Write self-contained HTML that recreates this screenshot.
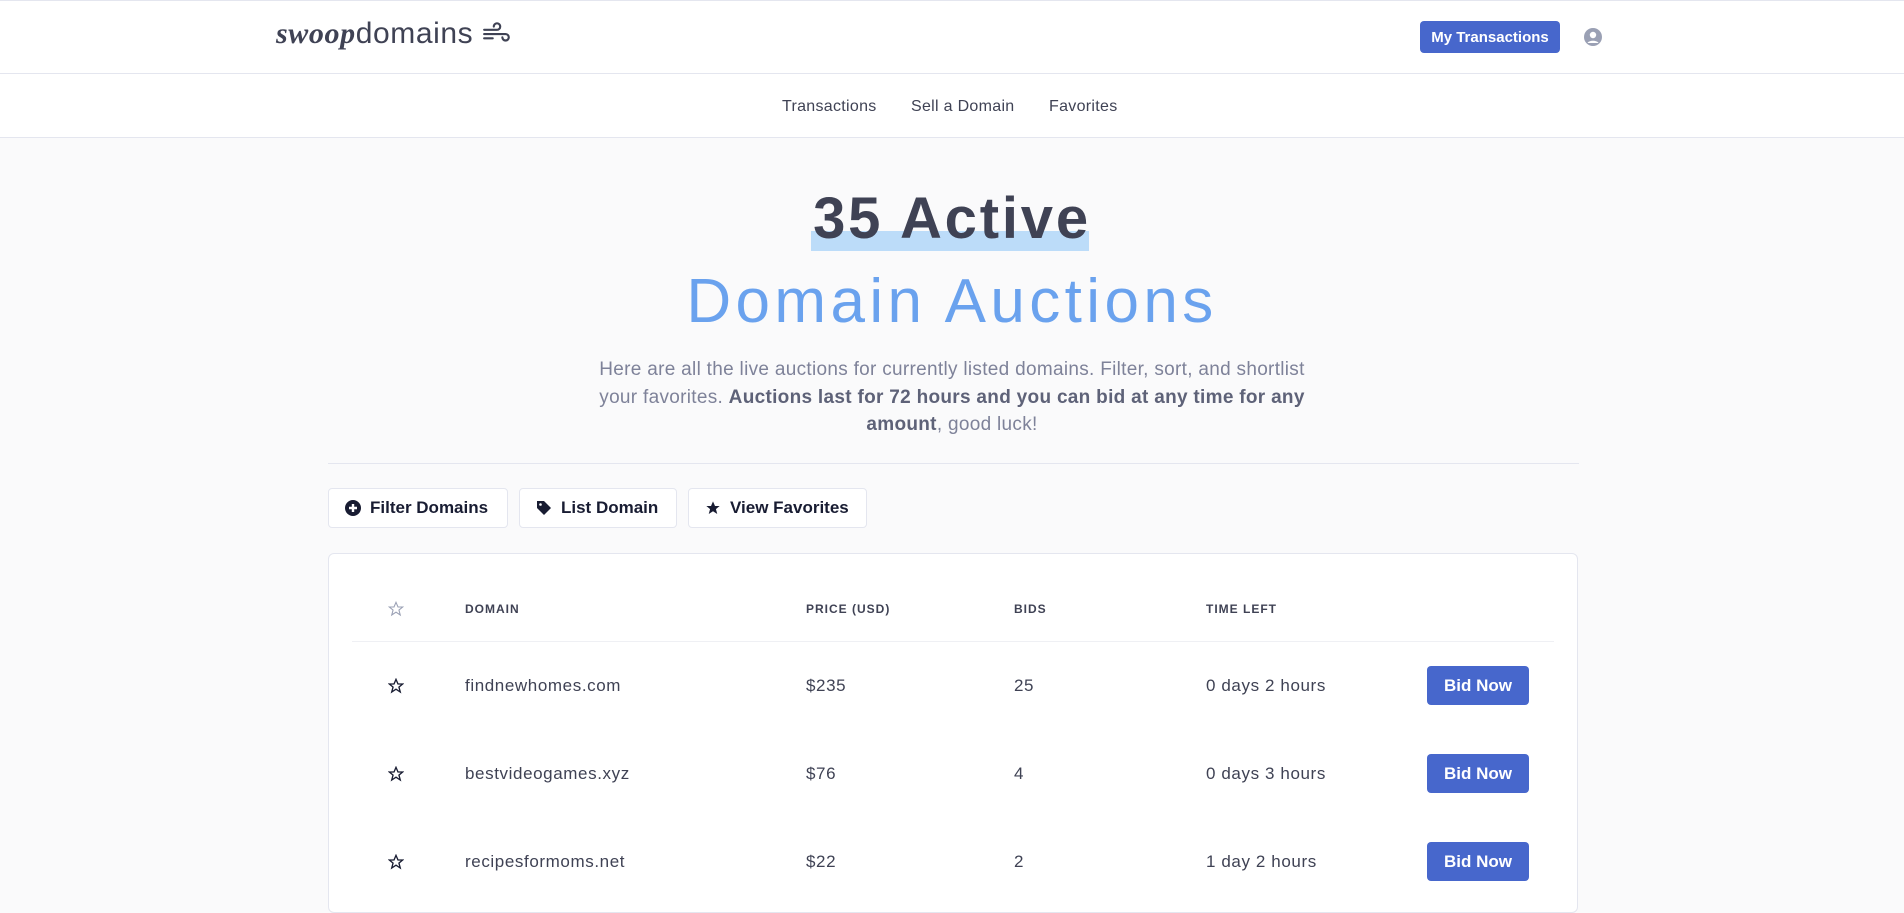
<!DOCTYPE html>
<html><head><meta charset="utf-8"><style>
*{box-sizing:border-box;margin:0;padding:0}
body{width:1904px;height:890px;overflow:hidden;background:#fafafb;font-family:"Liberation Sans",sans-serif;color:#3f4254;position:relative}
.abs{position:absolute}
.top{left:0;top:0;width:1904px;height:74px;background:#fff;border-bottom:1px solid #e4e6ef;border-top:1px solid #e4e6ef}
.nav{left:0;top:74px;width:1904px;height:64px;background:#fff;border-bottom:1px solid #e4e6ef}
.navl{top:98px;font-size:16px;color:#3f4254;letter-spacing:0.3px}
.btn{border:1px solid #e4e6ef;background:#fff;border-radius:4px;font-size:17px;font-weight:bold;color:#181c32;display:flex;align-items:center;gap:9px;padding-left:16px}
.th{top:602px;font-size:12px;font-weight:bold;letter-spacing:1px;color:#3f4254}
.td{font-size:17px;color:#3f4254;letter-spacing:0.6px}
.bid{left:1427px;width:102px;height:39px;background:#4767cc;color:#fff;border-radius:4px;font-size:17px;font-weight:bold;display:flex;align-items:center;justify-content:center}
</style></head><body>
<div class="abs top"></div>
<div class="abs nav"></div>
<div class="abs" style="left:276px;top:17px;font-size:30px;color:#3f4254;white-space:nowrap;letter-spacing:0.6px">
<span style="font-family:'Liberation Serif',serif;font-style:italic;font-weight:bold">swoop</span><span>domains</span>
<svg width="30" height="24" viewBox="0 0 28 22" style="vertical-align:-2px" fill="none" stroke="#3f4254" stroke-width="2" stroke-linecap="round"><path d="M2 8h12a3 3 0 1 0-3-3"/><path d="M2 12h20a3 3 0 1 1-3 3"/><path d="M2 16h8"/></svg></div>
<div class="abs" style="left:1420px;top:21px;width:140px;height:32px;background:#4767cc;border-radius:4px;color:#fff;font-size:15px;font-weight:bold;display:flex;align-items:center;justify-content:center">My Transactions</div>
<svg class="abs" style="left:1584px;top:28px" width="18" height="18" viewBox="0 0 18 18"><circle cx="9" cy="9" r="9" fill="#9aa0b4"/><circle cx="9" cy="7" r="3.2" fill="#fff"/><path d="M3.5 15c1.5-3 9.5-3 11 0" fill="#fff"/></svg>
<div class="abs navl" style="left:782px">Transactions</div>
<div class="abs navl" style="left:911px">Sell a Domain</div>
<div class="abs navl" style="left:1049px">Favorites</div>
<div class="abs" style="left:811px;top:231px;width:278px;height:20px;background:#bcdcf9"></div>
<div class="abs" style="left:0;width:1904px;top:184px;text-align:center;font-size:58px;font-weight:bold;color:#3f4254;line-height:70px;letter-spacing:2.8px">35 Active</div>
<div class="abs" style="left:0;width:1904px;top:264px;text-align:center;font-size:62px;color:#6aa2ee;line-height:76px;letter-spacing:4.4px">Domain Auctions</div>
<div class="abs" style="left:452px;width:1000px;top:356px;text-align:center;font-size:19px;line-height:27.5px;color:#7e8299;letter-spacing:0.3px">Here are all the live auctions for currently listed domains. Filter, sort, and shortlist<br>your favorites. <b style="color:#5e6278">Auctions last for 72 hours and you can bid at any time for any<br>amount</b>, good luck!</div>
<div class="abs" style="left:328px;top:463px;width:1251px;height:1px;background:#e4e6ef"></div>
<div class="abs btn" style="left:328px;top:488px;width:180px;height:40px"><svg width="16" height="16" viewBox="0 0 16 16"><circle cx="8" cy="8" r="8" fill="#181c32"/><path d="M8 4v8M4 8h8" stroke="#fff" stroke-width="2.4"/></svg>Filter Domains</div>
<div class="abs btn" style="left:519px;top:488px;width:158px;height:40px"><svg width="16" height="16" viewBox="0 0 16 16"><path d="M1 1h7l7 7-7 7-7-7z" fill="#181c32"/><circle cx="4.5" cy="4.5" r="1.3" fill="#fff"/></svg>List Domain</div>
<div class="abs btn" style="left:688px;top:488px;width:179px;height:40px"><svg width="16" height="16" viewBox="0 0 24 24"><path d="M12 2l3 7h7l-5.6 4.6 2 7.4L12 16.8 5.6 21l2-7.4L2 9h7z" fill="#181c32"/></svg>View Favorites</div>
<div class="abs" style="left:328px;top:553px;width:1250px;height:360px;background:#fff;border:1px solid #e4e6ef;border-radius:6px"></div>
<svg class="abs" style="left:388px;top:601px" width="16" height="16" viewBox="0 0 24 24"><path d="M12 2l3 7h7l-5.6 4.6 2 7.4L12 16.8 5.6 21l2-7.4L2 9h7z" fill="none" stroke="#9aa0b4" stroke-width="1.6"/></svg>
<div class="abs th" style="left:465px">DOMAIN</div>
<div class="abs th" style="left:806px">PRICE (USD)</div>
<div class="abs th" style="left:1014px">BIDS</div>
<div class="abs th" style="left:1206px">TIME LEFT</div>
<div class="abs" style="left:352px;top:641px;width:1202px;height:1px;background:#eff0f4"></div>

<svg class="abs" style="left:388px;top:678px" width="16" height="16" viewBox="0 0 24 24"><path d="M12 2l3 7h7l-5.6 4.6 2 7.4L12 16.8 5.6 21l2-7.4L2 9h7z" fill="none" stroke="#181c32" stroke-width="2"/></svg>
<div class="abs td" style="left:465px;top:676px">findnewhomes.com</div>
<div class="abs td" style="left:806px;top:676px">$235</div>
<div class="abs td" style="left:1014px;top:676px">25</div>
<div class="abs td" style="left:1206px;top:676px">0 days 2 hours</div>
<div class="abs bid" style="top:666px">Bid Now</div>

<svg class="abs" style="left:388px;top:766px" width="16" height="16" viewBox="0 0 24 24"><path d="M12 2l3 7h7l-5.6 4.6 2 7.4L12 16.8 5.6 21l2-7.4L2 9h7z" fill="none" stroke="#181c32" stroke-width="2"/></svg>
<div class="abs td" style="left:465px;top:764px">bestvideogames.xyz</div>
<div class="abs td" style="left:806px;top:764px">$76</div>
<div class="abs td" style="left:1014px;top:764px">4</div>
<div class="abs td" style="left:1206px;top:764px">0 days 3 hours</div>
<div class="abs bid" style="top:754px">Bid Now</div>

<svg class="abs" style="left:388px;top:854px" width="16" height="16" viewBox="0 0 24 24"><path d="M12 2l3 7h7l-5.6 4.6 2 7.4L12 16.8 5.6 21l2-7.4L2 9h7z" fill="none" stroke="#181c32" stroke-width="2"/></svg>
<div class="abs td" style="left:465px;top:852px">recipesformoms.net</div>
<div class="abs td" style="left:806px;top:852px">$22</div>
<div class="abs td" style="left:1014px;top:852px">2</div>
<div class="abs td" style="left:1206px;top:852px">1 day 2 hours</div>
<div class="abs bid" style="top:842px">Bid Now</div>
</body></html>
